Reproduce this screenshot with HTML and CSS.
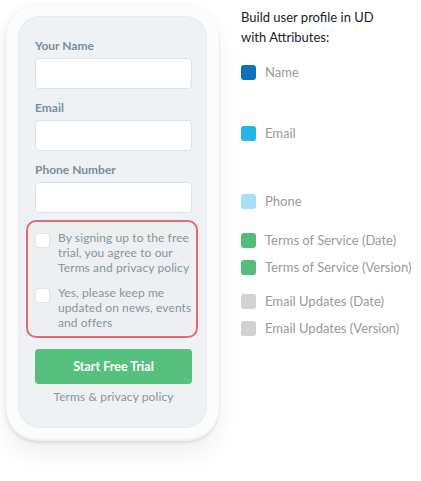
FILE: index.html
```html
<!DOCTYPE html>
<html>
<head>
<meta charset="utf-8">
<link rel="stylesheet" href="styles.css">
</head>
<body>
<div class="page">
  <div class="phone">
    <div class="panel">
      <div class="field">
        <div class="label">Your Name</div>
        <div class="input"></div>
      </div>
      <div class="field">
        <div class="label">Email</div>
        <div class="input"></div>
      </div>
      <div class="field field-phone">
        <div class="label">Phone Number</div>
        <div class="input"></div>
      </div>
      <div class="consent">
        <div class="check-row">
          <span class="box"></span>
          <span class="check-text">By signing up to the free trial, you agree to our Terms and privacy policy</span>
        </div>
        <div class="check-row check-row-2">
          <span class="box"></span>
          <span class="check-text">Yes, please keep me updated on news, events and offers</span>
        </div>
      </div>
      <div class="btn">Start Free Trial</div>
      <div class="terms">Terms &amp; privacy policy</div>
    </div>
  </div>
  <div class="legend">
    <div class="title">Build user profile in UD<br>with Attributes:</div>
    <div class="item g-name"><span class="sq c-name"></span>Name</div>
    <div class="item g-email"><span class="sq c-email"></span>Email</div>
    <div class="item g-phone"><span class="sq c-phone"></span>Phone</div>
    <div class="item g-tos"><span class="sq c-green"></span>Terms of Service (Date)</div>
    <div class="item g-next"><span class="sq c-green"></span>Terms of Service (Version)</div>
    <div class="item g-upd"><span class="sq c-grey"></span>Email Updates (Date)</div>
    <div class="item g-next"><span class="sq c-grey"></span>Email Updates (Version)</div>
  </div>
</div>
</body>
</html>
```

FILE: styles.css
```css
* { box-sizing: border-box; }
html, body { margin: 0; padding: 0; background: #ffffff; }
body { font-family: Lato, "Open Sans", sans-serif; }

.page {
  display: flex;
  align-items: flex-start;
  width: 421px;
  height: 481px;
  overflow: hidden;
}

.phone {
  margin: 5px 0 0 6px;
  width: 213px;
  height: 436px;
  padding: 11px 12px 0 12px;
  border-radius: 32px;
  background: #fbfcfc;
  box-shadow: 0 2px 3px rgba(0,0,0,0.08), 0 14px 24px rgba(0,0,0,0.06), -2px 0 6px rgba(0,0,0,0.04), inset 0 -2px 2px rgba(0,0,0,0.05);
  flex: none;
}

.panel {
  width: 189px;
  height: 412px;
  border-radius: 22px;
  background: #eef2f5;
  box-shadow: inset 0 0 0 1px #e6ebef;
  padding: 22px 15px 0 17px;
}

.field { margin-bottom: 11px; }
.field-phone { margin-top: 2px; margin-bottom: 7px; }

.label {
  font-size: 12px;
  font-weight: 700;
  color: #7a8d9b;
  line-height: 16px;
  margin-bottom: 4px;
}

.input {
  height: 31px;
  background: #ffffff;
  border: 1px solid #d9e3ec;
  border-radius: 4px;
}

.consent {
  margin: 0 -6px 0 -9px;
  height: 118px;
  border: 2px solid #e8686c;
  border-radius: 10px;
  background: #eeeff2;
  padding: 8px 0 0 7px;
}

.check-row { display: flex; gap: 8px; }
.check-row-2 { margin-top: 10px; }

.box {
  flex: none;
  width: 15px;
  height: 15px;
  margin-top: 3px;
  background: #fff;
  border: 1px solid #e1e6ec;
  border-radius: 3px;
}

.check-text {
  font-size: 12px;
  line-height: 15px;
  letter-spacing: 0.1px;
  color: #8494a2;
}

.btn {
  margin-top: 11px;
  height: 35px;
  background: #58c07f;
  border-radius: 4px;
  color: #fff;
  font-weight: 700;
  font-size: 12.5px;
  display: flex;
  align-items: center;
  justify-content: center;
}

.terms {
  margin-top: 5px;
  text-align: center;
  font-size: 12px;
  line-height: 16px;
  letter-spacing: 0.1px;
  color: #8494a2;
}

.legend {
  margin-left: 22px;
  padding-top: 7px;
  display: flex;
  flex-direction: column;
}

.title {
  font-size: 13px;
  line-height: 20px;
  color: #222;
}

.item {
  display: flex;
  align-items: center;
  gap: 9px;
  height: 20px;
  font-size: 13px;
  color: #9a9a9a;
  white-space: nowrap;
}

.g-name { margin-top: 15px; }
.g-email { margin-top: 41px; }
.g-phone { margin-top: 48px; }
.g-tos { margin-top: 19px; }
.g-upd { margin-top: 14px; }
.g-next { margin-top: 7px; }

.sq {
  width: 15px;
  height: 15px;
  border-radius: 3px;
  flex: none;
}
.c-name { background: #0a72ba; }
.c-email { background: #23b4e8; }
.c-phone { background: #a8dff7; }
.c-green { background: #55bd7a; }
.c-grey { background: #d2d2d2; }
```
